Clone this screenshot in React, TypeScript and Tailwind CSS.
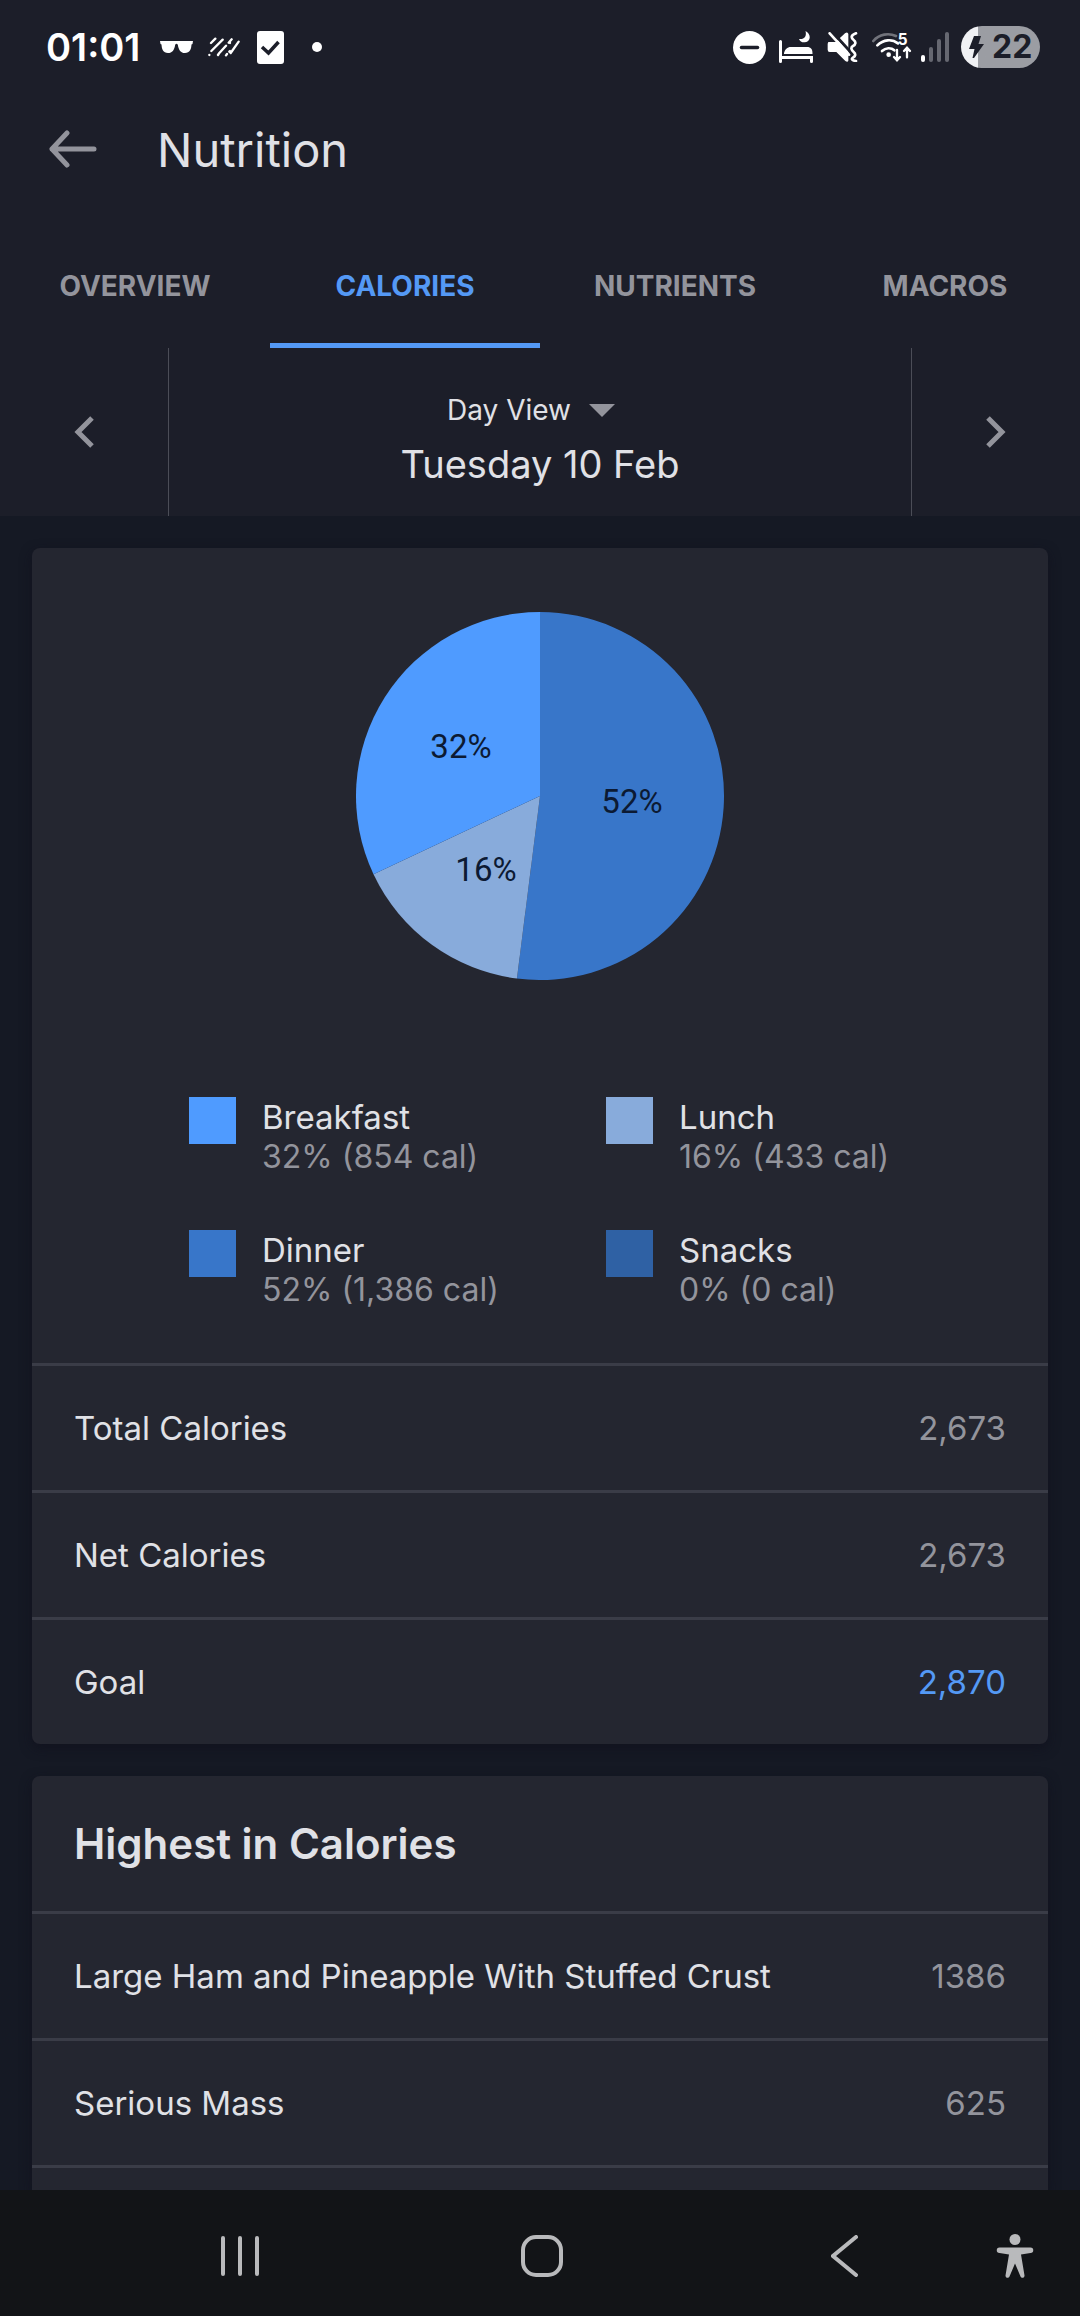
import { useState } from "react";
import { clsx } from "clsx";

type Meal = {
  name: string;
  percent: number;
  calories: string;
  swatch: string;
  fill: string;
};

const meals: Meal[] = [
  { name: "Breakfast", percent: 32, calories: "854", swatch: "bg-[#4f9bff]", fill: "fill-[#4f9bff]" },
  { name: "Lunch", percent: 16, calories: "433", swatch: "bg-[#88abdb]", fill: "fill-[#88abdb]" },
  { name: "Dinner", percent: 52, calories: "1,386", swatch: "bg-[#3876c9]", fill: "fill-[#3876c9]" },
  { name: "Snacks", percent: 0, calories: "0", swatch: "bg-[#2f61a4]", fill: "fill-[#2f61a4]" },
];

const totals = [
  { label: "Total Calories", value: "2,673" },
  { label: "Net Calories", value: "2,673" },
  { label: "Goal", value: "2,870", highlight: true },
];

const highest = [
  { label: "Large Ham and Pineapple With Stuffed Crust", value: "1386" },
  { label: "Serious Mass", value: "625" },
];

const tabs = ["Overview", "Calories", "Nutrients", "Macros"];

function StatusBar() {
  return (
    <div className="flex h-[94px] shrink-0 items-center justify-between pr-10 pl-[46px] text-white">
      <div className="flex items-center">
        <span className="text-[38px] leading-none font-semibold">01:01</span>
        <svg className="ml-5 h-3 w-[33px]" viewBox="0 0 33 12" fill="currentColor" aria-hidden>
          <path d="M0 0h33l-.5 3-1 .6c-.3 5-1.600 8.400-6.500 8.400-4.300 0-6.300-3-7.200-8.300-.3-.6-.9-.9-1.300-.9s-1 .3-1.300.9C14.300 9 12.300 12 8 12 3.100 12 1.800 8.600 1.500 3.600L.5 3z" />
        </svg>
        <svg
          className="ml-[15px] h-5 w-8"
          viewBox="0 0 96 60"
          fill="none"
          stroke="currentColor"
          strokeWidth="7"
          strokeLinecap="round"
          aria-hidden
        >
          <path d="M9 18 22 5M4 54h.1M10 42 44 8M32 50 54 26M62 17 71 7M30 54l2-3M54 55l3-4M64 44l2-2M68 48 92 14" />
          <path d="M66 18h.1" />
        </svg>
        <svg className="ml-[17px] h-[33px] w-[27px]" viewBox="0 0 27 33" aria-hidden>
          <rect width="27" height="33" rx="3" fill="currentColor" />
          <path d="m5 16 6.500 6L21.500 11" fill="none" stroke="#1c1e29" strokeWidth="3.500" />
        </svg>
        <span className="ml-7 size-[10px] rounded-full bg-white" />
      </div>

      <div className="flex items-center">
        <svg className="size-[33px]" viewBox="0 0 33 33" aria-hidden>
          <circle cx="16.500" cy="16.500" r="16.500" fill="currentColor" />
          <path d="M8.500 16.500h16" stroke="#1c1e29" strokeWidth="3.500" strokeLinecap="round" />
        </svg>
        <svg className="ml-[13px] h-8 w-[34px]" viewBox="0 0 34 32" fill="currentColor" aria-hidden>
          <path d="M0 10.500a1.500 1.500 0 0 1 3 0V25h31v5.500a1.500 1.500 0 0 1-3 0V28H3v2.500a1.500 1.500 0 0 1-3 0z" />
          <path d="M5 23v-1c1-3.500 3-6 7-6h16c4 0 5.500 2 5.500 7z" />
          <path d="M26.500 0c5.500 2.500 6 10.500-.5 11.300-3 .3-5-.8-6-3.300 5 .8 8-2.500 6.500-8z" />
        </svg>
        <svg className="ml-[14px] h-[30px] w-[31px]" viewBox="0 0 93 90" aria-hidden>
          <path d="M4 30h22L54 4q8-6 10 2v80q-2 6-9 1L28 60H8q-6 0-6-7V35z" fill="currentColor" />
          <path d="m14-2 60 66" stroke="#1c1e29" strokeWidth="9" />
          <path d="m8 4 58 64" stroke="currentColor" strokeWidth="8" strokeLinecap="round" />
          <path
            d="M87 4C70 10 72 18 80 24s6 14-2 18-5 12 2 18 6 12-2 17 0 9 9 10"
            fill="none"
            stroke="currentColor"
            strokeWidth="8"
            strokeLinecap="round"
          />
        </svg>
        <svg className="ml-[14px] h-[38px] w-10" viewBox="0 -12 120 114" fill="none" aria-hidden>
          <g strokeWidth="8" strokeLinecap="round">
            <path d="M4 27C22 6 50 2 72 12" stroke="#71737b" />
            <path d="M16 40c18-18 44-20 62-6M30 57c11-10 27-11 37-2" stroke="currentColor" />
          </g>
          <circle cx="50" cy="68" r="7" fill="currentColor" />
          <path
            d="M75 54v30M66 75l9 10 9-10M105 76V48M96 57l9-10 9 10"
            stroke="currentColor"
            strokeWidth="7"
            strokeLinecap="round"
          />
          <text x="77" y="39" fill="currentColor" className="font-['Inter',sans-serif] text-[46px] font-bold">
            5
          </text>
        </svg>
        <svg className="ml-[9px] h-[30px] w-7" viewBox="0 0 28 30" aria-hidden>
          <rect y="23" width="4" height="7" rx="2" fill="currentColor" />
          <g fill="#666871">
            <rect x="8" y="15" width="4" height="15" rx="2" />
            <rect x="16" y="7" width="4" height="23" rx="2" />
            <rect x="24" width="4" height="30" rx="2" />
          </g>
        </svg>
        <div className="ml-3 flex h-[42px] w-[79px] items-center rounded-full bg-linear-to-r from-[#f0f1f4] from-[17px] to-[#9b9da3] to-[17px] pl-2 text-[#1c1e29]">
          <svg className="h-[22px] w-[15px]" viewBox="0 0 15 22" fill="currentColor" aria-hidden>
            <path d="M5 0h7L9.500 8H15L5 22H3.500L5.500 13H0z" />
          </svg>
          <span className="ml-2 text-[32px] leading-none font-bold">22</span>
        </div>
      </div>
    </div>
  );
}

function PieChart() {
  const radius = 184;
  const order = [meals[2], meals[1], meals[0]];
  const labels = [
    { x: 276, y: 201 },
    { x: 130, y: 269 },
    { x: 105, y: 146 },
  ];
  const point = (percent: number) => {
    const angle = (percent / 100) * Math.PI * 2;
    return `${radius + radius * Math.sin(angle)} ${radius - radius * Math.cos(angle)}`;
  };

  let start = 0;
  return (
    <svg className="mx-auto block size-[368px]" viewBox="0 0 368 368" role="img" aria-label="Calories by meal">
      {order.map((meal, i) => {
        const end = start + meal.percent;
        const d = `M${radius} ${radius}L${point(start)}A${radius} ${radius} 0 ${meal.percent > 50 ? 1 : 0} 1 ${point(end)}Z`;
        start = end;
        return (
          <g key={meal.name}>
            <path d={d} className={meal.fill} />
            <text
              x={labels[i].x}
              y={labels[i].y}
              textAnchor="middle"
              className="fill-[#0c1a33] font-['Roboto',sans-serif] text-[33px]"
            >
              {meal.percent}%
            </text>
          </g>
        );
      })}
    </svg>
  );
}

function Row({ label, value, highlight = false }: { label: string; value: string; highlight?: boolean }) {
  return (
    <li className="flex h-[127px] items-center justify-between border-t-3 border-[#3a3c47] px-[42px]">
      <span>{label}</span>
      <span className={highlight ? "text-[#5499f5]" : "text-[#93949c]"}>{value}</span>
    </li>
  );
}

function SystemNav() {
  return (
    <nav
      aria-label="System"
      className="grid h-[126px] shrink-0 grid-cols-[89px_1fr_1fr_1fr_84px] items-center bg-[#121417] pt-[6px] text-[#b9babc]"
    >
      <button type="button" aria-label="Recent apps" className="col-start-2 justify-self-center">
        <svg className="h-10 w-[38px]" viewBox="0 0 38 40" stroke="currentColor" strokeWidth="4" strokeLinecap="round">
          <path d="M2 2v36M19 2v36M36 2v36" />
        </svg>
      </button>
      <button type="button" aria-label="Home" className="justify-self-center">
        <svg className="size-[42px]" viewBox="0 0 42 42" fill="none" stroke="currentColor" strokeWidth="4">
          <rect x="2" y="2" width="38" height="38" rx="13" />
        </svg>
      </button>
      <button type="button" aria-label="Back" className="justify-self-center">
        <svg
          className="h-[42px] w-[27px]"
          viewBox="0 0 27 42"
          fill="none"
          stroke="currentColor"
          strokeWidth="4"
          strokeLinecap="round"
        >
          <path d="M25 2 2 21l23 19" />
        </svg>
      </button>
      <button type="button" aria-label="Accessibility" className="justify-self-start">
        <svg className="h-11 w-[38px]" viewBox="0 0 38 44" fill="currentColor">
          <circle cx="19" cy="5.500" r="5.500" />
          <path d="M3.500 13.500h31a2.700 2.700 0 0 1 0 5.500L25 20.500l3.500 21c.3 2.500-3 3.300-4 1l-5.500-13-5.500 13c-1 2.300-4.300 1.500-4-1l3.500-21L3.500 19a2.700 2.700 0 0 1 0-5.500z" />
        </svg>
      </button>
    </nav>
  );
}

export default function App() {
  const [activeTab, setActiveTab] = useState("Calories");

  return (
    <div className="flex h-screen flex-col overflow-hidden bg-[#151924] font-['Inter',sans-serif] text-[33px] leading-10 text-[#e0e1e6]">
      <div className="shrink-0 bg-[#1c1e29]">
        <StatusBar />

        <header className="flex h-[130px] items-center pb-5 pl-[49px]">
          <button type="button" aria-label="Back" className="text-[#93949c]">
            <svg
              className="h-[38px] w-12"
              viewBox="0 0 48 38"
              fill="none"
              stroke="currentColor"
              strokeWidth="5"
              strokeLinecap="round"
              strokeLinejoin="round"
            >
              <path d="M18 3 3 19l15 16M3 19h42" />
            </svg>
          </button>
          <h1 className="ml-[60px] text-[47px] leading-none">Nutrition</h1>
        </header>

        <div role="tablist" className="grid h-[124px] grid-cols-4">
          {tabs.map((tab) => (
            <button
              key={tab}
              type="button"
              role="tab"
              aria-selected={tab === activeTab}
              onClick={() => setActiveTab(tab)}
              className={clsx(
                "border-y-5 border-t-transparent text-[28px] font-bold uppercase",
                tab === activeTab
                  ? "border-b-[#5499f5] text-[#5499f5]"
                  : "border-b-transparent text-[#93949c]",
              )}
            >
              {tab}
            </button>
          ))}
        </div>

        <div className="grid h-[168px] grid-cols-[168px_1fr_168px] text-[#93949c]">
          <button type="button" aria-label="Previous day" className="flex items-center justify-center">
            <svg className="h-8 w-5" viewBox="0 0 20 32" fill="none" stroke="currentColor" strokeWidth="5">
              <path d="M18 2 4 16l14 14" />
            </svg>
          </button>
          <div className="flex flex-col items-center justify-center border-x border-[#4b4d57] pt-4 text-[#e0e1e6]">
            <label className="flex h-12 items-center">
              <select aria-label="View" className="appearance-none bg-transparent text-[28px]">
                <option>Day View</option>
              </select>
              <svg className="h-[13px] w-[62px] fill-[#93949c]" viewBox="0 0 62 13" aria-hidden>
                <path d="M18 0h26L31 13z" />
              </svg>
            </label>
            <p className="text-[38px] leading-[60px]">Tuesday 10 Feb</p>
          </div>
          <button type="button" aria-label="Next day" className="flex items-center justify-center">
            <svg className="h-8 w-5" viewBox="0 0 20 32" fill="none" stroke="currentColor" strokeWidth="5">
              <path d="m2 2 14 14L2 30" />
            </svg>
          </button>
        </div>
      </div>

      <main className="flex min-h-0 flex-1 flex-col gap-8 overflow-hidden px-8 pt-8">
        <section className="shrink-0 overflow-hidden rounded-lg bg-[#242630] shadow-[0_4px_12px_rgba(16,16,28,0.7)]">
          <div className="pt-16">
            <PieChart />
          </div>
          <ul className="mt-[117px] mb-[53px] grid grid-cols-2 gap-y-[53px] pr-[25px] pl-[157px]">
            {meals.map((meal) => (
              <li key={meal.name} className="flex gap-[26px]">
                <span className={clsx("size-[47px] shrink-0", meal.swatch)} />
                <div>
                  <p>{meal.name}</p>
                  <p className="text-[32px] text-[#93949c]">
                    {meal.percent}% ({meal.calories} cal)
                  </p>
                </div>
              </li>
            ))}
          </ul>
          <ul>
            {totals.map((row) => (
              <Row key={row.label} {...row} />
            ))}
          </ul>
        </section>

        <section className="flex-1 rounded-t-lg bg-[#242630] shadow-[0_4px_12px_rgba(16,16,28,0.7)]">
          <h2 className="px-[42px] text-[42px] leading-[135px] font-semibold">Highest in Calories</h2>
          <ul className="border-b-3 border-[#3a3c47]">
            {highest.map((row) => (
              <Row key={row.label} {...row} />
            ))}
          </ul>
        </section>
      </main>

      <SystemNav />
    </div>
  );
}
